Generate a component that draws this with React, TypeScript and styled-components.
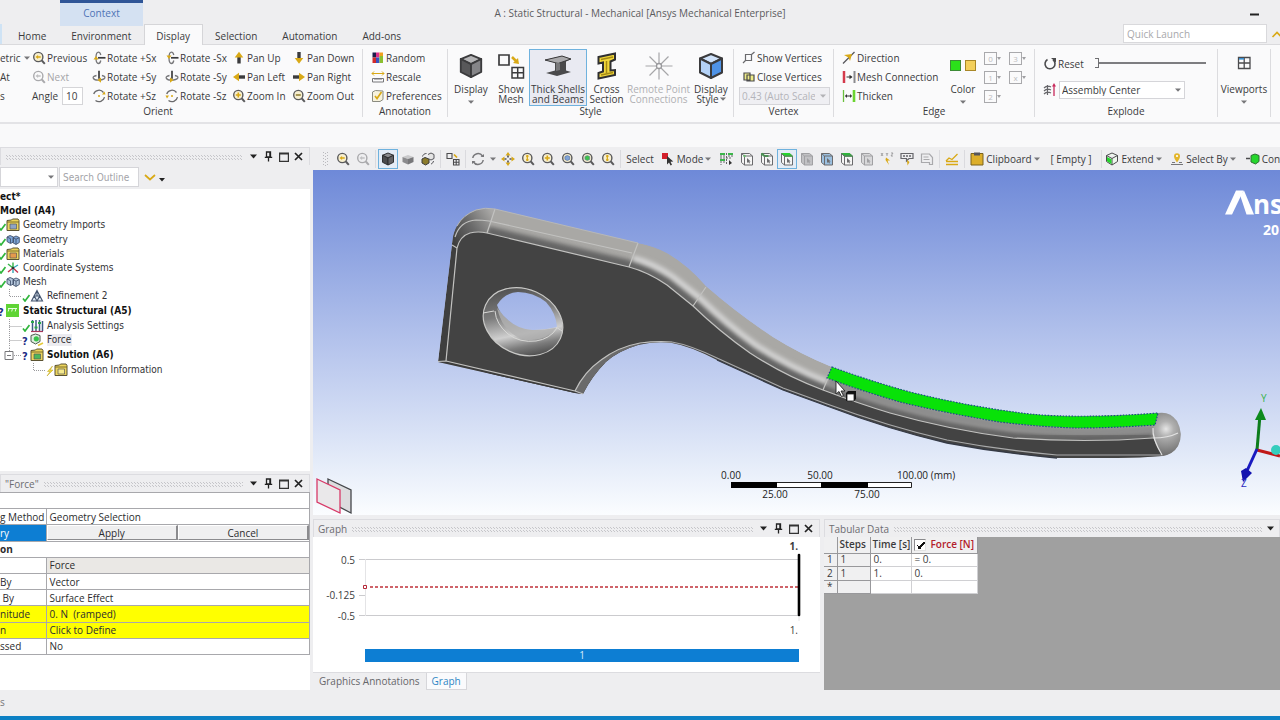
import React from 'react';
import styled, { createGlobalStyle, css } from 'styled-components';

const GlobalStyle = createGlobalStyle`
  *, *::before, *::after { box-sizing: border-box; }
  body { margin: 0; background: #eeeef0; overflow-x: hidden; }
  body, button, input, select, table {
    font-family: "Open Sans", "Noto Sans", sans-serif;
    font-size: 10px;
    line-height: 12px;
    color: #3b3b3d;
  }
  button { background: none; border: 0; padding: 0; }
  svg { display: block; flex: none; }
`;

const treeFont = '"DejaVu Sans Condensed", "DejaVu Sans", sans-serif';

/* ---------- shell ---------- */

const Shell = styled.div`
  min-height: 100vh;
  display: flex;
  flex-direction: column;
  overflow: hidden;
  background: #eeeef0;
`;

const TitleBar = styled.header`
  display: grid;
  grid-template-columns: 1fr auto 1fr;
  height: 24px;
`;

const ContextTab = styled.div`
  width: 83px;
  margin-left: 60px;
  border-top: 3px solid #2f5597;
  background: #d4e1f2;
  color: #4f74b6;
  text-align: center;
  line-height: 21px;
`;

const Title = styled.h1`
  margin: 0;
  font-size: 10px;
  font-weight: 400;
  line-height: 26px;
  color: #5b5b5e;
`;

const WindowButtons = styled.div`
  display: flex;
  justify-content: flex-end;
  align-items: center;
  padding: 2px 21px 0 0;
`;

const TabRow = styled.div`
  display: flex;
  height: 21px;
  border-bottom: 1px solid #dadadd;
`;

const FileEdge = styled.span`
  width: 2px;
  margin-right: 4px;
  background: #cfe3f5;
`;

const Tabs = styled.nav`
  display: flex;
  flex: 1;
`;

const Tab = styled.button<{ $active?: boolean }>`
  height: 21px;
  padding: 1px 12px 0 11px;
  border: 1px solid transparent;
  border-bottom: 0;
  ${p => p.$active && css`
    background: #fafafb;
    border-color: #d5d5d8;
  `}
`;

const QuickLaunch = styled.input`
  width: 144px;
  height: 19px;
  margin-right: 4px;
  padding: 0 3px;
  border: 1px solid #d9d9dc;
  background: #fff;
  &::placeholder { color: #a8a8ab; }
`;

const Collapse = styled.button`
  width: 9px;
  overflow: hidden;
`;

/* ---------- ribbon ---------- */

const Ribbon = styled.div`
  display: flex;
  height: 79px;
  padding: 4px 0 5px;
  background: #fafafb;
  border-bottom: 2px solid #e3e3e6;
`;

const RibbonTail = styled.div`
  height: 23px;
  background: #f9f9fa;
`;

const Group = styled.section<{ $w: number }>`
  flex: none;
  display: flex;
  flex-direction: column;
  width: ${p => p.$w}px;
  border-right: 1px solid #dcdcdf;
`;

const GroupBody = styled.div<{ $cols: string; $pad?: number }>`
  display: grid;
  grid-template-columns: ${p => p.$cols};
  height: 57px;
  padding-left: ${p => p.$pad ?? 0}px;
`;

const GroupLabel = styled.div<{ $shift?: number }>`
  padding-right: ${p => p.$shift ?? 0}px;
  text-align: center;
  line-height: 11px;
`;

const Stack = styled.div`
  display: flex;
  flex-direction: column;
`;

const Command = styled.button<{ $muted?: boolean; $inset?: number; $gap?: number }>`
  display: flex;
  align-items: center;
  gap: ${p => p.$gap ?? 1}px;
  height: 19px;
  padding: 0 0 1px ${p => p.$inset ?? 0}px;
  white-space: nowrap;
  text-align: left;
  color: ${p => (p.$muted ? '#a5a5a8' : 'inherit')};
`;

const AngleField = styled.label`
  display: flex;
  align-items: center;
  gap: 4px;
  height: 19px;
  padding-bottom: 1px;
`;

const AngleInput = styled.input`
  width: 21px;
  height: 18px;
  padding: 0 3px;
  border: 1px solid #d5d5d8;
  background: #fff;
`;

const BigButton = styled.button<{ $active?: boolean; $muted?: boolean }>`
  display: grid;
  grid-template-rows: 31px 24px;
  justify-items: center;
  height: 57px;
  border: 1px solid ${p => (p.$active ? '#6fb2de' : 'transparent')};
  background: ${p => (p.$active ? '#e9eaf2' : 'none')};
  color: ${p => (p.$muted ? '#b0b0b3' : 'inherit')};
  white-space: nowrap;
  > :first-child { align-self: center; }
`;

const Caption = styled.span`
  display: flex;
  flex-direction: column;
  align-items: center;
  justify-content: space-between;
  height: 24px;
  padding: 3px 0 1px;
  line-height: 10px;
`;

const TwoLines = styled.span`
  text-align: center;
  svg { display: inline-block; margin-left: 1px; vertical-align: 2px; }
`;

const SelectFrame = styled.span<{ $w: number; $muted?: boolean; $h?: number }>`
  position: relative;
  display: flex;
  align-items: center;
  width: ${p => p.$w}px;
  height: ${p => p.$h ?? 18}px;
  border: 1px solid #d5d5d9;
  background: ${p => (p.$muted ? '#efeff3' : '#fff')};
  select {
    appearance: none;
    width: 100%;
    height: 100%;
    padding: 0 14px 0 2px;
    border: 0;
    background: none;
    color: ${p => (p.$muted ? '#b4b4ba' : '#3b3b3d')};
    opacity: 1;
  }
  > svg {
    position: absolute;
    right: 3px;
    pointer-events: none;
    opacity: ${p => (p.$muted ? 0.5 : 1)};
  }
`;

const ColorSwatches = styled.span`
  display: flex;
  align-items: center;
  gap: 4px;
`;

const Swatch = styled.i<{ $fill: string; $edge: string }>`
  width: 11px;
  height: 11px;
  background: ${p => p.$fill};
  border: 1px solid ${p => p.$edge};
`;

const EdgeTypeGrid = styled.div`
  display: grid;
  grid-template-columns: 25px 25px;
  grid-auto-rows: 19px;
`;

const EdgeType = styled.button`
  display: flex;
  align-items: center;
`;

const EdgeNumber = styled.span`
  width: 13px;
  height: 13px;
  border: 1px solid #a9a9ac;
  color: #bcbcbf;
  font-size: 8px;
  line-height: 11px;
`;

const ExplodeRow = styled.div<{ $h: number }>`
  display: flex;
  align-items: center;
  gap: 3px;
  height: ${p => p.$h}px;
`;

const Slider = styled.input`
  appearance: none;
  width: 111px;
  height: 12px;
  margin: 0 0 2px 8px;
  background: linear-gradient(#7d7d80, #7d7d80) center / 100% 2px no-repeat;
  &::-webkit-slider-thumb {
    appearance: none;
    width: 4px;
    height: 10px;
    background: #fafafb;
    border: 1px solid #6e6e71;
    border-left: 0;
  }
`;

/* ---------- docking area ---------- */

const Workspace = styled.main`
  flex: 1;
  display: flex;
  gap: 3px;
  min-height: 543px;
`;

const SideColumn = styled.aside`
  flex: none;
  display: flex;
  flex-direction: column;
  gap: 3px;
  width: 310px;
`;

const Panel = styled.section<{ $grow?: string }>`
  display: flex;
  flex-direction: column;
  flex: ${p => p.$grow ?? 'none'};
  min-width: 0;
`;

const PanelHead = styled.div`
  display: flex;
  align-items: center;
  gap: 4px;
  height: 18px;
  padding: 0 5px 0 4px;
  border: 1px solid #dcdce0;
  border-bottom: 0;
  color: #6c6c70;
  white-space: nowrap;
`;

const HatchGrip = styled.span`
  flex: 1;
  height: 6px;
  margin-right: 1px;
  background-image:
    radial-gradient(#c6c6ca 36%, transparent 42%),
    radial-gradient(#c6c6ca 36%, transparent 42%);
  background-size: 3px 3px;
  background-position: 0 0, 1px 1px;
`;

const HeadButton = styled.button`
  width: 11px;
  height: 12px;
  display: grid;
  place-items: center;
`;

const OutlineFilter = styled.div`
  display: flex;
  align-items: center;
  gap: 1px;
  height: 24px;
`;

const SearchInput = styled.input`
  width: 80px;
  height: 20px;
  margin-right: 4px;
  padding: 0 3px;
  border: 1px solid #d5d5d9;
  background: #fff;
  font-family: ${treeFont};
  &::placeholder { color: #a3a3a8; }
`;

const TreeArea = styled.div`
  flex: 1;
  padding-top: 1px;
  background: #fff;
`;

const Tree = styled.ul`
  display: grid;
  grid-auto-rows: 1fr;
  height: 187px;
  margin: 0;
  padding: 0;
  list-style: none;
  font-family: ${treeFont};
  color: #333336;
`;

const TreeRow = styled.li<{ $level: number; $strong?: boolean }>`
  display: flex;
  align-items: center;
  padding-left: ${p => (p.$level > 1 ? p.$level * 24 - 39 : 0)}px;
  margin-left: ${p => (p.$level === 1 ? -2 : 0)}px;
  font-weight: ${p => (p.$strong ? 700 : 400)};
  color: ${p => (p.$strong ? '#111' : 'inherit')};
  white-space: nowrap;
`;

const Status = styled.span`
  width: 8px;
  color: #1d2a86;
  font-weight: 700;
  font-size: 11px;
  line-height: 12px;
  padding-top: 3px;
`;

const TreeLabel = styled.span<{ $hot?: boolean }>`
  padding: 0 1px 0 0;
  margin-left: 3px;
  background: ${p => (p.$hot ? '#ececf0' : 'none')};
`;

const DetailsArea = styled.div`
  flex: 1;
  background: #fff;
`;

const DetailsTable = styled.table`
  width: 100%;
  height: 163px;
  table-layout: fixed;
  border-collapse: collapse;
  color: #2c2c2e;
  td, th {
    height: 16px;
    padding: 0 3px;
    border: 1px solid #a8a8ac;
    border-left: 0;
    text-align: left;
    font-weight: 400;
    white-space: pre;
  }
  th { padding: 0; }
`;

const Col = styled.col<{ $w?: number }>`
  width: ${p => (p.$w ? `${p.$w}px` : 'auto')};
`;

const DetailRow = styled.tr<{ $tone?: 'edit' | 'warn' | 'readonly' }>`
  background: ${p => (p.$tone === 'warn' ? '#ffff00' : 'none')};
  th {
    background: ${p => (p.$tone === 'edit' ? '#0d7ed3' : 'none')};
    color: ${p => (p.$tone === 'edit' ? '#fff' : 'inherit')};
  }
  td { background: ${p => (p.$tone === 'readonly' ? '#eae8e5' : 'none')}; }
  && td { padding: ${p => (p.$tone === 'edit' ? '0' : '0 3px')}; }
  &&& .section { font-weight: 700; }
`;

const ConfirmPair = styled.div`
  display: grid;
  grid-template-columns: 1fr 1fr;
`;

const ConfirmButton = styled.button`
  height: 15px;
  background: #efeff0;
  border: 1px solid #fff;
  border-right: 2px solid #8b8b8e;
  border-bottom: 1px solid #8b8b8e;
  color: #2c2c2e;
`;

const MainColumn = styled.div`
  flex: 1;
  display: flex;
  flex-direction: column;
  min-width: 0;
`;

const Toolbar = styled.div`
  display: flex;
  align-items: center;
  height: 23px;
  overflow: hidden;
`;

const Tool = styled.button<{ $w?: number; $active?: boolean }>`
  flex: none;
  display: flex;
  align-items: center;
  justify-content: center;
  gap: 2px;
  width: ${p => p.$w ?? 20}px;
  height: 20px;
  white-space: nowrap;
  border: 1px solid ${p => (p.$active ? '#6fb2de' : 'transparent')};
  background: ${p => (p.$active ? '#e4ecf6' : 'none')};
`;

const ToolText = styled.span<{ $w: number }>`
  flex: none;
  width: ${p => p.$w}px;
  text-align: center;
`;

const Divider = styled.i`
  flex: none;
  width: 1px;
  height: 18px;
  margin: 0 2px;
  background: #dadade;
`;

const Viewport = styled.div`
  position: relative;
  flex: 1;
  min-height: 345px;
  svg {
    position: absolute;
    inset: 0;
    width: 100%;
    height: 100%;
  }
`;

const BottomRow = styled.div`
  display: flex;
  gap: 4px;
  height: 171px;
  margin-top: 4px;
`;

const GraphCanvas = styled.div`
  flex: 1;
  min-height: 0;
  background: #fff;
  border-bottom: 1px solid #dcdce0;
  svg { width: 100%; height: 100%; }
`;

const GraphTabs = styled.div`
  display: flex;
  height: 17px;
`;

const GraphTab = styled.button<{ $active?: boolean }>`
  padding: 0 5px;
  color: ${p => (p.$active ? '#2f86c4' : '#66666a')};
  background: ${p => (p.$active ? '#fafafc' : 'none')};
  border: 1px solid ${p => (p.$active ? '#d6d6da' : 'transparent')};
  border-top: 0;
`;

const TabularArea = styled.div`
  flex: 1;
  background: #a0a0a0;
`;

const DataTable = styled.table`
  width: 153px;
  height: 57px;
  table-layout: fixed;
  border-collapse: collapse;
  background: #fff;
  td, th {
    height: 13px;
    padding: 0 3px;
    border: 1px solid #d0d0d3;
    border-top: 0;
    border-left: 0;
    text-align: left;
    font-weight: 400;
    line-height: 11px;
    white-space: nowrap;
    overflow: hidden;
  }
  thead th {
    height: 16px;
    padding: 0 2px;
    background: #f0f0f1;
    border-color: #98989b;
    font-weight: 600;
  }
  tbody th, tbody td:nth-child(2) {
    background: #f0f0f1;
    border-color: #98989b;
  }
`;

const ForceHead = styled.label`
  display: flex;
  align-items: center;
  gap: 5px;
  color: #b3202c;
`;

const Tick = styled.input`
  appearance: none;
  width: 12px;
  height: 12px;
  margin: 0;
  background:
    linear-gradient(45deg, transparent 38%, #111 38%, #111 62%, transparent 62%) 2px 5px / 4px 4px no-repeat,
    linear-gradient(-45deg, transparent 42%, #111 42%, #111 60%, transparent 60%) 3px 2px / 7px 7px no-repeat,
    #fff;
  border: 1px solid #8a8a8d;
  border-right-color: #e2e2e2;
  border-bottom-color: #e2e2e2;
`;

const StatusBar = styled.footer`
  height: 30px;
  border-bottom: 4px solid #0c80c4;
  line-height: 24px;
  color: #77777a;
`;

/* ---------- glyphs ---------- */

type GlyphProps = { w?: number; h?: number; box?: string; children: React.ReactNode };
const Glyph = ({ w = 14, h = 14, box, children }: GlyphProps) => (
  <svg width={w} height={h} viewBox={box ?? `0 0 ${w} ${h}`} fill="none" aria-hidden="true">{children}</svg>
);

const Caret = () => (
  <Glyph w={6} h={4}><path d="M0 .5h6L3 3.8z" fill="#77777a" /></Glyph>
);

const GOLD = '#d9a916';

const Magnifier = ({ muted, kind }: { muted?: boolean; kind?: 'in' | 'out' | 'left' | 'cube' | 'green' | 'doc' }) => {
  const ink = muted ? '#a9a9ac' : '#5a5a5c';
  return (
    <Glyph>
      <circle cx="6.3" cy="6" r="4.6" stroke={ink} strokeWidth="1.400" fill={muted ? 'none' : '#f7efcf'} />
      <path d="M9.8 9.500l3 3.300" stroke={ink} strokeWidth="2" />
      {kind === 'in' && <path d="M6.300 3.500v5M3.800 6h5" stroke={GOLD} strokeWidth="1.600" />}
      {kind === 'out' && <path d="M3.800 6h5" stroke="#8c7a2c" strokeWidth="1.500" />}
      {kind === 'left' && <path d="M3.500 6l2.600-2v1.200h2.600v1.600H6.100V8z" fill={muted ? '#c0c0c2' : GOLD} />}
      {kind === 'cube' && <path d="M6.300 3.400l2.400 1.200v2.800L6.300 8.600 3.900 7.400V4.600z" fill="#7fa2d6" stroke="#4d6a9c" strokeWidth=".6" />}
      {kind === 'green' && <path d="M6.300 3.400l2.400 1.200v2.800L6.300 8.600 3.900 7.400V4.600z" fill="#3ec24b" stroke="#6a7fa0" strokeWidth=".6" />}
      {kind === 'doc' && <path d="M6.300 3v6M5 4.200h2.600M5 7.800h2.600" stroke={GOLD} strokeWidth="1.300" />}
    </Glyph>
  );
};

const RotateGlyph = ({ axis, flip }: { axis: 'x' | 'y' | 'z'; flip?: boolean }) => (
  <Glyph>
    {axis === 'x' && (
      <>
        <path d="M8.800 4C8.300 2.300 7.400 1.200 6.500 1.200 4.900 1.200 4 3.800 4 6.800s1 5.700 2.500 5.700c1 0 1.900-1.200 2.300-3" stroke="#77777a" strokeWidth="1.300" />
        <path d="M6 6.800h7.500" stroke="#3b3b3d" strokeWidth="1.700" />
        <path d={flip ? 'M1.500 4.500h5L4 8z' : 'M1.500 8.500h5L4 5z'} fill={GOLD} />
      </>
    )}
    {axis === 'y' && (
      <>
        <path d="M4.500 5.500C2 6 .8 7 1.200 8c.7 1.700 4 2.500 7.300 2 3-.4 4.800-1.600 4.400-2.900-.3-.8-1.400-1.400-3-1.600" stroke="#77777a" strokeWidth="1.300" />
        <path d="M7 .8v8" stroke="#3b3b3d" strokeWidth="1.700" />
        <path d={flip ? 'M5 7.500l3.500 2.500L5 12.700z' : 'M9 7.500L5.500 10 9 12.700z'} fill={GOLD} />
      </>
    )}
    {axis === 'z' && (
      <>
        <path d="M1.700 5A5.600 5.600 0 0 1 11.500 3.500M12.500 8.200A5.600 5.600 0 0 1 3.500 11.400" stroke="#6a6a6c" strokeWidth="1.300" />
        <path d={flip ? 'M.5 6.500h3.500L2 9.500z' : 'M10 5.500h3.500L12.500 2.500z'} fill={GOLD} />
        <circle cx="7" cy="7" r="1" fill={GOLD} />
      </>
    )}
  </Glyph>
);

const UpArrow = () => (
  <Glyph>
    <path d="M5.300 6h3.400v6.500H5.300z" fill="#3b3b3d" />
    <path d="M7 .8l4.300 5.700H2.700z" fill={GOLD} />
  </Glyph>
);

const DropArrow = () => (
  <Glyph>
    <path d="M5.300 1h3.400v6H5.300z" fill="#3b3b3d" />
    <path d="M7 12.700L11.300 7H2.700z" fill={GOLD} />
  </Glyph>
);

const SideArrow = ({ right }: { right?: boolean }) => (
  <Glyph>
    <g transform={right ? undefined : 'rotate(180 7 7)'}>
      <path d="M1 5.300h6v3.400H1z" fill="#3b3b3d" />
      <path d="M13 7L7 2.700v8.600z" fill={GOLD} />
    </g>
  </Glyph>
);

type CubeProps = { size?: number; top: string; left: string; right: string; line?: string };
const Cube = ({ size = 14, top, left, right, line = '#3b3b3d' }: CubeProps) => (
  <Glyph w={size} h={size} box="0 0 28 28">
    <g stroke={line} strokeWidth="2" strokeLinejoin="round">
      <path d="M14 2l11 4.500-11 5.500L3 6.500z" fill={top} />
      <path d="M3 6.500L14 12v14L3 20.500z" fill={left} />
      <path d="M25 6.500L14 12v14l11-5.500z" fill={right} />
    </g>
  </Glyph>
);

const SelectCube = ({ accent, muted, part }: { accent?: string; muted?: boolean; part?: 'point' | 'edge' | 'face' | 'fill' }) => {
  const ink = muted ? '#a0a0a3' : '#6a6a6d';
  return (
    <Glyph>
      <path d="M1.500 1.500h8l3 2.500v9h-8l-3-2.500z" fill={part === 'fill' ? accent : '#f6f6f6'} stroke={ink} />
      {part === 'face' && <path d="M1.500 1.500h8l3 2.800h-8z" fill={accent} stroke={accent} />}
      {part === 'edge' && <path d="M1.500 1.500l3 2.500h4" stroke={accent} strokeWidth="2" />}
      <path d="M4.500 4v9M4.500 4h8M1.500 1.500l3 2.500" stroke={ink} />
      {part === 'point' && <circle cx="4.500" cy="4" r="1.200" fill={accent} />}
      <path d="M7 6v5l1.200-1.100.9 1.700.9-.5-.8-1.600 1.500-.1z" fill={ink} />
    </Glyph>
  );
};

const Pin = () => (
  <Glyph w={9} h={11}><path d="M2.500 1h4v5h-4zM.8 6.300h7.400M4.500 6.500V10.500" stroke="#222" strokeWidth="1.300" /><path d="M5.300 1h1.500v5H5.300z" fill="#222" /></Glyph>
);
const Maximize = () => (
  <Glyph w={10} h={10}><path d="M.6 1h8.800v8.300H.6zM.6 2h8.800" stroke="#333" strokeWidth="1.200" /></Glyph>
);
const Close = () => (
  <Glyph w={9} h={9}><path d="M1 1l7 7M8 1L1 8" stroke="#222" strokeWidth="1.700" /></Glyph>
);
const Chevron = ({ up }: { up?: boolean }) => (
  <Glyph w={12} h={7}><path d={up ? 'M1.500 6L6 1.500 10.500 6' : 'M1 1l5 4.500L11 1'} stroke={GOLD} strokeWidth="1.700" /></Glyph>
);

const Folder = ({ mark }: { mark: string }) => (
  <Glyph>
    <path d="M1 2.500L5.500 2l1-1h5.500l1 1.500v10H1z" fill="#ecd45c" stroke="#5b5332" />
    <path d="M1 4h12" stroke="#7d6e2b" />
    <path d="M4 6h6.500v5H4z" fill={mark} stroke="#5a5a5a" strokeWidth=".7" />
  </Glyph>
);
const Bricks = ({ fill }: { fill: string }) => (
  <Glyph>
    <path d="M1 4l3-1.500L7.500 4v5L4.500 10.500 1 8.500zM7 4.500l3-1.500 3.300 1.500v5L10 11.500 7 9.800zM1 4l3.500 1.700V10M7 4.500l3 1.700v5M10 6.200l3.200-1.500" fill={fill} stroke="#44546e" strokeWidth=".9" />
  </Glyph>
);
const Axes = () => (
  <Glyph>
    <path d="M7 7V1.500M7 7L2 3" stroke="#38b44a" strokeWidth="1.400" />
    <path d="M7 7l5 4.500M7 7l-5 4" stroke="#c4304a" strokeWidth="1.400" />
    <path d="M7 7l5-3M7 7v5" stroke="#35a9b6" strokeWidth="1.400" />
    <circle cx="7" cy="7" r="1.300" fill="#333" />
  </Glyph>
);
const RefineMark = () => (
  <Glyph><path d="M7 1.500l5.500 10.500h-11zM4.300 7h5.400L7 12zM7 1.500V7" fill="#dfe8f2" stroke="#44546e" strokeWidth="1.100" /></Glyph>
);
const StructuralMark = () => (
  <Glyph><path d="M0 0h13v13H0z" fill="#5fd435" /><path d="M2 4.500h9M3 4.500l-.8 3M6.500 4.500l-.8 3M10 4.500l-.8 3" stroke="#e8ffe0" /></Glyph>
);
const SettingsMark = () => (
  <Glyph>
    <path d="M2.500 1v11M6 1v11M9.500 1v11M12.500 2v10" stroke="#3f5b86" strokeWidth="1.500" />
    <path d="M1 3h3M4.500 8.500h3M8 4h3" stroke="#2aa84a" strokeWidth="2" />
    <path d="M1 12.500h12" stroke="#a8385c" strokeWidth="1.200" />
  </Glyph>
);
const ForceMark = () => (
  <Glyph>
    <path d="M5.500 1L10 2.500v6L5.500 11 1 8.500v-6z" fill="#dfeee0" stroke="#4a5a4d" />
    <circle cx="6.300" cy="5.800" r="2.600" fill="#38c24c" />
    <path d="M8 12.500l5-2.500" stroke="#e5c93b" strokeWidth="1.800" />
  </Glyph>
);
const Check = () => (
  <Glyph w={8} h={9}><path d="M1 5.500l2 2.500L7.500 2" stroke="#2fb53c" strokeWidth="1.700" /></Glyph>
);
const Bolt = () => (
  <Glyph w={8} h={10}><path d="M6.500 0L1.500 5.500h2.500L1 10l6-6H4.300z" fill="#f2dd3a" stroke="#bfa31c" strokeWidth=".5" /></Glyph>
);

const Branch = ({ tee, box }: { tee?: boolean; box?: boolean }) => (
  <svg width="13" height="14" viewBox="0 0 13 14" fill="none" overflow="visible" aria-hidden="true">
    <path d={tee ? 'M.5 0v14.500M.5 7.500H13' : 'M.5 0v7.500H13'} stroke="#9a9a9d" strokeDasharray="1 1" />
    {box && <path d="M-4 3.500h8v8h-8zM-2 7.500h4" fill="#fff" stroke="#77777a" />}
  </svg>
);

/* ---------- panels ---------- */

const HeadButtons = () => (
  <>
    <HeadButton aria-label="Panel menu"><Glyph w={7} h={5}><path d="M0 .5h7L3.500 4.500z" fill="#222" /></Glyph></HeadButton>
    <HeadButton aria-label="Pin"><Pin /></HeadButton>
    <HeadButton aria-label="Maximize"><Maximize /></HeadButton>
    <HeadButton aria-label="Close"><Close /></HeadButton>
  </>
);

type Node = {
  label: string; level: number; strong?: boolean; hot?: boolean;
  icon?: React.ReactNode; status?: React.ReactNode; tee?: boolean; box?: boolean;
};

const nodes: Node[] = [
  { label: 'ect*', level: 0, strong: true },
  { label: 'Model (A4)', level: 0, strong: true },
  { label: 'Geometry Imports', level: 1, status: <Check />, icon: <Folder mark="#8fa4c4" /> },
  { label: 'Geometry', level: 1, status: <Check />, icon: <Bricks fill="#7fa6d8" /> },
  { label: 'Materials', level: 1, status: <Check />, icon: <Folder mark="#e59a4c" /> },
  { label: 'Coordinate Systems', level: 1, status: <Check />, icon: <Axes /> },
  { label: 'Mesh', level: 1, status: <Check />, icon: <Bricks fill="#b6c8dd" /> },
  { label: 'Refinement 2', level: 2, status: <Check />, icon: <RefineMark /> },
  { label: 'Static Structural (A5)', level: 1, strong: true, status: '?', icon: <StructuralMark /> },
  { label: 'Analysis Settings', level: 2, tee: true, status: <Check />, icon: <SettingsMark /> },
  { label: 'Force', level: 2, tee: true, hot: true, status: '?', icon: <ForceMark /> },
  { label: 'Solution (A6)', level: 2, box: true, strong: true, status: '?', icon: <Folder mark="#4cb85a" /> },
  { label: 'Solution Information', level: 3, status: <Bolt />, icon: <Folder mark="#f5e98c" /> },
];

const Outline = () => (
  <Panel $grow="324 0 324px">
    <PanelHead><HatchGrip /><HeadButtons /></PanelHead>
    <OutlineFilter>
      <SelectFrame $w={58} $h={20}>
        <select aria-label="Outline filter"><option> </option></select><Caret />
      </SelectFrame>
      <SearchInput placeholder="Search Outline" aria-label="Search Outline" />
      <HeadButton aria-label="Expand"><Chevron /></HeadButton>
      <HeadButton aria-label="More"><Glyph w={6} h={10}><path d="M0 6h6L3 9.500z" fill="#222" /></Glyph></HeadButton>
    </OutlineFilter>
    <TreeArea>
      <Tree>
        {nodes.map(n => (
          <TreeRow key={n.label} $level={n.level} $strong={n.strong}>
            {n.level > 1 && <Branch tee={n.tee} box={n.box} />}
            {n.level > 0 && <Status>{n.status}</Status>}
            {n.icon}
            {n.level > 0 ? <TreeLabel $hot={n.hot}>{n.label}</TreeLabel> : n.label}
          </TreeRow>
        ))}
      </Tree>
    </TreeArea>
  </Panel>
);

type Detail = { name: string; value: string; tone?: 'warn' | 'readonly' };
const details: Detail[] = [
  { name: '', value: 'Force', tone: 'readonly' },
  { name: 'By', value: 'Vector' },
  { name: ' By', value: 'Surface Effect' },
  { name: 'nitude', value: '0. N  (ramped)', tone: 'warn' },
  { name: 'n', value: 'Click to Define', tone: 'warn' },
  { name: 'ssed', value: 'No' },
];

const Details = () => (
  <Panel $grow="216 0 216px">
    <PanelHead>{'"Force"'}<HatchGrip /><HeadButtons /></PanelHead>
    <DetailsArea>
      <DetailsTable>
        <colgroup><Col $w={46} /><Col /></colgroup>
        <tbody>
          <DetailRow><th className="section" colSpan={2} /></DetailRow>
          <DetailRow><th scope="row">g Method</th><td>Geometry Selection</td></DetailRow>
          <DetailRow $tone="edit">
            <th scope="row">ry</th>
            <td><ConfirmPair><ConfirmButton>Apply</ConfirmButton><ConfirmButton>Cancel</ConfirmButton></ConfirmPair></td>
          </DetailRow>
          <DetailRow><th className="section" colSpan={2}>on</th></DetailRow>
          {details.map(d => (
            <DetailRow key={d.value} $tone={d.tone}><th scope="row">{d.name}</th><td>{d.value}</td></DetailRow>
          ))}
        </tbody>
      </DetailsTable>
    </DetailsArea>
  </Panel>
);

const RibbonBar = () => (
  <Ribbon>
    <Group $w={363}>
      <GroupBody $cols="32px 60px 73px 67px 60px 70px">
        <Stack>
          <Command $gap={3}>etric<Caret /></Command>
          <Command>At</Command>
          <Command>s</Command>
        </Stack>
        <Stack>
          <Command><Magnifier kind="left" />Previous</Command>
          <Command $muted><Magnifier kind="left" muted />Next</Command>
          <AngleField>Angle<AngleInput defaultValue="10" /></AngleField>
        </Stack>
        <Stack>
          <Command><RotateGlyph axis="x" />Rotate +Sx</Command>
          <Command><RotateGlyph axis="y" />Rotate +Sy</Command>
          <Command><RotateGlyph axis="z" />Rotate +Sz</Command>
        </Stack>
        <Stack>
          <Command><RotateGlyph axis="x" flip />Rotate -Sx</Command>
          <Command><RotateGlyph axis="y" flip />Rotate -Sy</Command>
          <Command><RotateGlyph axis="z" flip />Rotate -Sz</Command>
        </Stack>
        <Stack>
          <Command><UpArrow />Pan Up</Command>
          <Command><SideArrow />Pan Left</Command>
          <Command><Magnifier kind="in" />Zoom In</Command>
        </Stack>
        <Stack>
          <Command><DropArrow />Pan Down</Command>
          <Command><SideArrow right />Pan Right</Command>
          <Command><Magnifier kind="out" />Zoom Out</Command>
        </Stack>
      </GroupBody>
      <GroupLabel $shift={46}>Orient</GroupLabel>
    </Group>

    <Group $w={85}>
      <GroupBody $cols="1fr" $pad={8}>
        <Stack>
          <Command>
            <Glyph><path d="M1.500 1.500H5v5H1.500z" fill="#1d1d4a" /><path d="M5 1.500h3.500v5H5z" fill="#e0308a" /><path d="M8.500 1.500H12V5H8.500z" fill="#f0a020" /><path d="M1.500 6.500H5V12H1.500z" fill="#d12a2a" /><path d="M5 6.500h3.500V12H5z" fill="#3a53c0" /><path d="M8.500 5H12v7H8.500z" fill="#8bbf30" /></Glyph>
            Random
          </Command>
          <Command>
            <Glyph><path d="M1 3.500h12M3 1.500l-2 2 2 2M11 1.500l2 2-2 2" stroke={GOLD} /><path d="M1.500 8.500h11v3.500h-11zM4 8.500V10M6 8.500V10M8 8.500V10M10 8.500V10" stroke="#77777a" /></Glyph>
            Rescale
          </Command>
          <Command>
            <Glyph><path d="M1.500 3l3-1.500 7.500.5v8.500l-3 2H1.500z" stroke="#8b8b80" fill="#f7f2dc" /><path d="M4 7l2 2.500L10.500 3" stroke={GOLD} strokeWidth="1.700" /></Glyph>
            Preferences
          </Command>
        </Stack>
      </GroupBody>
      <GroupLabel>Annotation</GroupLabel>
    </Group>

    <Group $w={286}>
      <GroupBody $cols="44px 36px 58px 39px 65px 40px" $pad={1}>
        <BigButton>
          <Cube size={26} top="#b5b5b7" left="#58585a" right="#858588" />
          <Caption>Display<Caret /></Caption>
        </BigButton>
        <BigButton>
          <Glyph w={28} h={28}>
            <path d="M2 3h10v10H2z" stroke="#3b3b3d" strokeWidth="1.700" />
            <path d="M15 15.500h11.500V26H15zM20.700 15.500V26M15 20.700h11.500" stroke="#3b3b3d" strokeWidth="1.500" />
            <path d="M15 5l4 4" stroke={GOLD} strokeWidth="2.500" /><path d="M22 12l-1-6-5 5z" fill={GOLD} />
          </Glyph>
          <Caption><TwoLines>Show<br />Mesh</TwoLines></Caption>
        </BigButton>
        <BigButton $active>
          <Glyph w={28} h={22}>
            <path d="M1 5l17-4 9 3-5 2.500v9l5 1.500-14 4-11-3 9-2.500V7.500z" fill="#4a4a4c" />
            <path d="M1 5l17-4 9 3-13 4.500z" fill="#a9a9ac" stroke="#3b3b3d" />
            <path d="M12 16l4-1V8.500L12 7z" fill="#77777a" />
          </Glyph>
          <Caption><TwoLines>Thick Shells<br />and Beams</TwoLines></Caption>
        </BigButton>
        <BigButton>
          <Glyph w={20} h={28}>
            <path d="M1.500 5L18 1.500v6l-4.500 2v9l4.500-.5v5L1.500 26.500v-5.500l4.500-1.500v-9l-4.500 1z" fill="#f0d63a" stroke="#2f2f31" strokeWidth="2" />
            <path d="M4 7.500l12-2.500M9.500 9v12M4 23l12-2.500" stroke="#a58a15" strokeWidth="1.500" />
          </Glyph>
          <Caption><TwoLines>Cross<br />Section</TwoLines></Caption>
        </BigButton>
        <BigButton $muted>
          <Glyph w={28} h={28}>
            <path d="M14 .5V11M14 17v10.500M.5 14H11M17 14h10.500M4.500 4.500L12 12M23.500 4.500L16 12M4.500 23.500L12 16M23.500 23.500L16 16" stroke="#a6a6a9" strokeWidth="1.200" />
            <circle cx="14" cy="14" r="2.500" stroke="#98989b" strokeWidth="1.300" />
          </Glyph>
          <Caption><TwoLines>Remote Point<br />Connections</TwoLines></Caption>
        </BigButton>
        <BigButton>
          <Cube size={28} top="#cfe2fa" left="#b4d2f7" right="#4f93e6" />
          <Caption><TwoLines>Display<br />Style<Caret /></TwoLines></Caption>
        </BigButton>
      </GroupBody>
      <GroupLabel>Style</GroupLabel>
    </Group>

    <Group $w={100}>
      <GroupBody $cols="1fr" $pad={5}>
        <Stack>
          <Command $inset={3}>
            <Glyph><path d="M3.500 3.500h6v6h-6zM9.500 3.500l3-2.500M3.500 9.500L1 12" stroke="#6a6a6d" strokeWidth="1.200" /></Glyph>
            Show Vertices
          </Command>
          <Command $inset={3}>
            <Glyph><path d="M2 3h6v7H2zM5 5h7v6H5z" stroke="#4b4b4d" strokeWidth="1.200" fill="#e6e23a" fillOpacity=".6" /></Glyph>
            Close Vertices
          </Command>
          <SelectFrame $w={91} $muted>
            <select aria-label="Vertex size" disabled><option>0.43 (Auto Scale)</option></select><Caret />
          </SelectFrame>
        </Stack>
      </GroupBody>
      <GroupLabel>Vertex</GroupLabel>
    </Group>

    <Group $w={201}>
      <GroupBody $cols="100px 42px 50px" $pad={8}>
        <Stack>
          <Command>
            <Glyph><path d="M1 12.500L12.500 1" stroke="#55555a" strokeWidth="1.200" /><path d="M2 4l8-1-2 7-1.500-3.500z" fill={GOLD} /></Glyph>
            Direction
          </Command>
          <Command>
            <Glyph><path d="M2 1v12" stroke="#d43a4c" strokeWidth="2.500" /><path d="M12.500 1v12" stroke="#8b8b8e" strokeWidth="2" /><path d="M4.500 7h5" stroke="#333" /><path d="M7.500 4.800L10.500 7l-3 2.200z" fill="#333" /></Glyph>
            Mesh Connection
          </Command>
          <Command>
            <Glyph><path d="M1.500 1v12" stroke="#6abf3c" strokeWidth="1.300" /><path d="M12 1v12" stroke="#6cd430" strokeWidth="2.600" /><path d="M3.500 7h6" stroke="#333" /><path d="M5 5L3 7l2 2zM8 5l2 2-2 2z" fill="#333" /></Glyph>
            Thicken
          </Command>
        </Stack>
        <BigButton>
          <ColorSwatches><Swatch $fill="#2be01a" $edge="#3c8b35" /><Swatch $fill="#f3cf5a" $edge="#a98727" /></ColorSwatches>
          <Caption>Color<Caret /></Caption>
        </BigButton>
        <EdgeTypeGrid>
          {['0', '3', '1', 'x', '2'].map(n => (
            <EdgeType key={n}><EdgeNumber>{n}</EdgeNumber><Glyph w={4} h={3}><path d="M0 0h4L2 3z" fill="#a0a0a3" /></Glyph></EdgeType>
          ))}
        </EdgeTypeGrid>
      </GroupBody>
      <GroupLabel>Edge</GroupLabel>
    </Group>

    <Group $w={183}>
      <GroupBody $cols="1fr" $pad={8}>
        <Stack>
          <ExplodeRow $h={30}>
            <Command>
              <Glyph><path d="M4.500 2.500a5 5 0 1 0 5.500.3" stroke="#4b4b4d" strokeWidth="1.600" /><path d="M8 1h5v4.500z" fill="#4b4b4d" /></Glyph>
              Reset
            </Command>
            <Slider type="range" defaultValue={0} aria-label="Explode factor" />
          </ExplodeRow>
          <ExplodeRow $h={22}>
            <Glyph w={13} h={14}><path d="M1 5c2-2 5-2 7-1M1 8c2-2 5-2 7-1M1 11c2-2 5-2 7-1M4.500 2v10" stroke="#66666a" strokeWidth="1.200" /><path d="M11 3v10" stroke="#c7285a" strokeWidth="1.300" /><path d="M11 0l2 3.500H9z" fill="#c7285a" /></Glyph>
            <SelectFrame $w={126}>
              <select aria-label="Explode center"><option>Assembly Center</option></select><Caret />
            </SelectFrame>
          </ExplodeRow>
        </Stack>
      </GroupBody>
      <GroupLabel>Explode</GroupLabel>
    </Group>

    <Group $w={53}>
      <GroupBody $cols="1fr">
        <BigButton>
          <Glyph w={14} h={20}><path d="M1.500 1.500h11.500v11H1.500zM7.200 1.500v11M1.500 7h11.500" stroke="#4b4b4d" strokeWidth="1.300" /><path d="M2 2h5v1.600H2z" fill="#3a8fd0" /></Glyph>
          <Caption>Viewports<Caret /></Caption>
        </BigButton>
      </GroupBody>
    </Group>
  </Ribbon>
);

const ViewToolbar = () => (
  <Toolbar>
    <Glyph w={20} h={16}><path d="M10.500 1v14M12.500 2v14M14.500 1v14" stroke="#b9b9bd" strokeDasharray="1 2" /></Glyph>
    <Tool aria-label="Previous view"><Magnifier kind="left" /></Tool>
    <Tool aria-label="Next view"><Magnifier kind="left" muted /></Tool>
    <Divider />
    <Tool $active aria-label="Shaded with edges"><Cube top="#8b8b8e" left="#4b4b4d" right="#636366" line="#2f2f31" /></Tool>
    <Tool aria-label="Shaded">
      <Glyph><path d="M1.500 5L7 3l5.500 2L7 7z" fill="#c9c9cb" /><path d="M1.500 5L7 7v5.500L1.500 10z" fill="#8b8b8e" /><path d="M12.500 5L7 7v5.500l5.500-2.500z" fill="#77777a" /></Glyph>
    </Tool>
    <Tool aria-label="Cycle display">
      <Glyph><path d="M1 7l3-1.500L8 7v4l-3.500 2L1 11z" fill="#8b7b2c" stroke="#3b3b3d" /><path d="M7 2.500L10 1l3 1.500v4L10 8 8 7" fill="#e4e4e4" stroke="#55555a" /><path d="M1.500 4.500C2 2.500 3.500 1.500 5.500 1.500M12.500 9c-.3 1.500-1 2.500-2.500 3" stroke="#55555a" /></Glyph>
    </Tool>
    <Divider />
    <Tool aria-label="Show mesh">
      <Glyph><path d="M1 1.500h5v5H1zM7.500 7.500h5.500V13H7.500zM10.200 7.500V13M7.500 10.200H13" stroke="#4b4b4d" strokeWidth="1.100" /><path d="M8 2.500l3 3" stroke={GOLD} strokeWidth="1.700" /></Glyph>
    </Tool>
    <Divider />
    <Tool aria-label="Rotate">
      <Glyph><path d="M1.800 6A5.300 5.300 0 0 1 11.500 4M12.200 8A5.300 5.300 0 0 1 2.500 10" stroke="#77777a" strokeWidth="1.500" /><path d="M9.500 5h3.500V2zM4.500 9H1v3z" fill="#77777a" /></Glyph>
    </Tool>
    <Tool $w={10} aria-label="Rotate options"><Caret /></Tool>
    <Tool aria-label="Pan">
      <Glyph><path d="M7 0l2.500 3.500h-5zM7 14l2.500-3.500h-5zM0 7l3.500-2.500v5zM14 7l-3.500-2.500v5z" fill={GOLD} /><path d="M7 3.500v2M7 8.500v2M3.500 7h2M8.500 7h2" stroke="#55555a" strokeWidth="1.700" /></Glyph>
    </Tool>
    <Tool aria-label="Zoom"><Magnifier kind="doc" /></Tool>
    <Tool aria-label="Zoom in"><Magnifier kind="in" /></Tool>
    <Tool aria-label="Zoom to fit"><Magnifier kind="cube" /></Tool>
    <Tool aria-label="Zoom to selection"><Magnifier kind="green" /></Tool>
    <Tool aria-label="Box zoom"><Magnifier kind="doc" /></Tool>
    <Divider />
    <ToolText $w={34}>Select</ToolText>
    <Tool $w={58}>
      <Glyph><path d="M1 1h6v6H1z" fill="#d3202c" /><path d="M6 4v8.500l2-2 1.600 3 1.400-.8-1.500-2.900 2.800-.3z" fill="#333" /></Glyph>
      Mode<Caret />
    </Tool>
    <Tool $w={22} aria-label="Select mode grid">
      <Glyph w={15} h={14}><path d="M1 2h5M9 2h5M1 8h5" stroke="#3bb54a" strokeWidth="2" /><path d="M2 3v3M5 3v3M10 3v3M13 3v3M2 9v4M5 9v3M7.500 1v12M1 6h12" stroke="#66666a" strokeDasharray="2 1" /><path d="M10 8v5l3-2z" fill="#333" /></Glyph>
    </Tool>
    <Tool aria-label="Vertex"><SelectCube part="point" accent="#66bb6a" /></Tool>
    <Tool aria-label="Edge"><SelectCube part="edge" accent="#2fb53c" /></Tool>
    <Tool $active aria-label="Face"><SelectCube part="face" accent="#25d62c" /></Tool>
    <Tool aria-label="Body"><SelectCube part="fill" accent="#c2c2c5" muted /></Tool>
    <Tool aria-label="Node"><SelectCube part="fill" accent="#9cc0e0" /></Tool>
    <Tool aria-label="Element face"><SelectCube part="face" accent="#2fb53c" /></Tool>
    <Tool aria-label="Element"><SelectCube part="fill" accent="#d8d8da" muted /></Tool>
    <Tool aria-label="Coordinates">
      <Glyph><path d="M1 1l2 3M3 1L1 4M6 1l1 1.500L8 1M7 2.500V4M11 1h2l-2 3h2" stroke="#98989b" strokeWidth=".9" /><path d="M6 5.500l4 3H7.500L9 13 5.500 8z" fill={GOLD} /></Glyph>
    </Tool>
    <Tool aria-label="Probe">
      <Glyph><path d="M1 1.500h12v5H9L6.500 9V6.500H1z" stroke="#66666a" strokeWidth="1.200" /><path d="M3 4h2M6 4h2M9 4h2" stroke="#66666a" strokeWidth="1.500" /><path d="M7 8l2.500 2-2 3.500z" fill={GOLD} /></Glyph>
    </Tool>
    <Tool aria-label="Tag"><Glyph><path d="M1.500 2h8l3 3.500v7h-3v-2h-8zM3.500 5h5M3.500 7.500h6" stroke="#a9a9ac" strokeWidth="1.200" /></Glyph></Tool>
    <Divider />
    <Tool aria-label="Chart"><Glyph><path d="M1 9l3-3 3 1.500L12.500 2M1 9.500h12M1 12.500h12" stroke={GOLD} strokeWidth="1.300" /></Glyph></Tool>
    <Divider />
    <Tool $w={76}>
      <Glyph><path d="M1 1.500h12v11.500H1z" fill="#dcae2a" stroke="#7a621c" /><path d="M4 .5h6v3H4z" fill="#55555a" /></Glyph>
      Clipboard<Caret />
    </Tool>
    <ToolText $w={56}>[ Empty ]</ToolText>
    <Divider />
    <Tool $w={59}>
      <Glyph><path d="M7 1l5.500 2.500v6L7 13 1.500 9.500v-6zM7 6.500V13M1.500 3.500L7 6.500l5.500-3" fill="#eef7ee" stroke="#4b4b4d" /><path d="M2 5v4.200L6.500 12V7.300z" fill="#25d62c" /></Glyph>
      Extend<Caret />
    </Tool>
    <Tool $w={80}>
      <Glyph><path d="M7 10.500C5 7.500 4 6 4 4.200a3 3 0 0 1 6 0C10 6 9 7.500 7 10.500z" fill="#e3b52a" /><circle cx="7" cy="4" r="1.100" fill="#fff" /><path d="M1 12.500h12M2 10.500h3M9 10.500h3" stroke="#77777a" strokeWidth="1.200" /></Glyph>
      Select By<Caret />
    </Tool>
    <Tool $w={58}>
      <Glyph><path d="M5 3.500L9 2l4 1.500v6L9.500 12 5 10z" fill="#25d62c" stroke="#2f6e33" /><path d="M0 6.500h4" stroke="#4b4b4d" strokeWidth="1.500" /></Glyph>
      Convert
    </Tool>
  </Toolbar>
);

const SILHOUETTE =
  'M438 362L452 244Q453 232 457 226Q463 215 476 210Q485 207 495 209L638 243Q654 246 667 253Q688 265 706 286Q738 314 773 337Q800 354 832 367Q870 381 910 392Q970 407 1030 414Q1080 418 1158 413Q1170 412 1176 421Q1184 434 1178 446Q1174 454 1163 456Q1140 458 1117 458H1057Q1000 453 947 443Q890 430 827 406L783 390L717 360Q690 346 672 343Q655 341 638 345Q618 351 606 362Q592 376 583 394L575 393Z';
const FACE_TOP =
  'M446 361L457 248Q460 236 470 233Q478 231 487 233L629 267Q648 272 667 285L693 306Q720 332 750 353Q785 376 823 390Q860 404 890 413Q950 430 1013 438Q1085 443 1153 438';
const LOWER_EDGE = 'M672 342Q690 345 717 358L783 388L827 404Q890 427 947 440Q1000 450 1057 455H1117L1163 455';
const HOLE = 'M497 305Q504 293 518 292Q533 292 546 302Q556 313 557 327Q545 330 533 330Q517 329 507 319Q499 312 497 305Z';

const ModelView = () => (
  <Viewport>
    <svg viewBox="313 170 967 345" preserveAspectRatio="xMidYMid slice" fill="none" role="img" aria-label="Lever model">
      <defs>
        <linearGradient id="sky" gradientUnits="userSpaceOnUse" x1="0" y1="170" x2="0" y2="515">
          <stop offset="0" stopColor="#6e89d8" /><stop offset=".5" stopColor="#b4c3ec" /><stop offset=".85" stopColor="#e5ecf9" /><stop offset="1" stopColor="#fbfdff" />
        </linearGradient>
        <linearGradient id="bore" gradientUnits="userSpaceOnUse" x1="496" y1="292" x2="540" y2="354">
          <stop offset="0" stopColor="#4c4c4c" /><stop offset=".4" stopColor="#7c7c7c" /><stop offset=".68" stopColor="#cfcfcf" /><stop offset=".85" stopColor="#7c7c7c" /><stop offset="1" stopColor="#4c4c4c" />
        </linearGradient>
        <radialGradient id="tip" gradientUnits="userSpaceOnUse" cx="1166" cy="429" r="26">
          <stop offset="0" stopColor="#e6e6e6" /><stop offset=".3" stopColor="#b0b0b0" /><stop offset="1" stopColor="#6f6f6f" />
        </radialGradient>
        <linearGradient id="corner" gradientUnits="userSpaceOnUse" x1="452" y1="240" x2="492" y2="212">
          <stop offset="0" stopColor="#3f3f3f" /><stop offset=".5" stopColor="#6b6b6b" /><stop offset="1" stopColor="#a9a8a6" />
        </linearGradient>
        <clipPath id="body"><path d={SILHOUETTE} /></clipPath>
        <filter id="soft" x="-5%" y="-5%" width="110%" height="110%"><feGaussianBlur stdDeviation="2" /></filter>
      </defs>
      <rect x="313" y="170" width="967" height="345" fill="url(#sky)" />

      <g clipPath="url(#body)">
        <path d={SILHOUETTE} fill="#a9a8a5" />
        <path d="M487 233L629 267Q648 272 667 285L693 306Q720 332 750 353Q785 376 823 390Q860 404 890 413Q950 430 1013 438Q1085 443 1153 438" stroke="#656565" strokeWidth="14" filter="url(#soft)" />
        <path d="M633 258Q652 263 672 276L700 298Q727 324 756 345Q790 367 828 382" stroke="#d8d8d8" strokeWidth="5" filter="url(#soft)" />
        <path d="M828 381Q880 402 950 417Q1015 429 1076 432Q1120 432 1156 429" stroke="#8d8d8d" strokeWidth="9" filter="url(#soft)" />
        <path d="M438 362L452 244Q453 218 476 209L495 209L487 233L457 250L446 361Z" fill="url(#corner)" />
        <path d={`${FACE_TOP}L1163 456L1117 470L900 450L717 375L640 350L606 362L580 400Z`} fill="#434343" />
        <path d="M438 362L446 361L575 391L583 394V400H438Z" fill="#3b3b3b" />
        <path d="M575 391Q584 372 601 360Q618 347 640 343L638 346Q618 351 606 362Q592 376 583 394Z" fill="#6a6a6a" />
      </g>

      <g stroke="#c2c2c0" strokeWidth="1.200" strokeLinejoin="round">
        <path d={FACE_TOP} />
        <path d="M438 361.500L446 361L575 391L583 394" />
        <path d="M452 245L457 248M487 233L495 209M455 237Q460 221 476 220Q482 220 489 221L632 253M629 267L638 243M693 306L706 287M823 390L828 378" />
        <path d="M575 391Q584 372 601 360Q618 347 640 343Q656 341 672 342" />
        <path d={LOWER_EDGE} stroke="#a9aaab" />
        <path d="M457 226Q463 215 476 210Q485 207 495 209L638 243" stroke="#b8b8b6" strokeWidth="1" />
      </g>
      <path d="M717 360L783 390L827 406Q890 430 947 443Q1000 453 1057 458" stroke="#353a45" strokeWidth="1.300" />

      <ellipse cx="523" cy="321.700" rx="41" ry="32.500" transform="rotate(24 523 321.700)" fill="url(#bore)" stroke="#c9c9c7" strokeWidth="1.200" />
      <path d="M497 308Q503 334 525 340Q545 342 556 328Q545 330 533 330Q517 329 507 319Z" fill="#b0b0b0" fillOpacity=".8" />
      <path d="M495 311Q496 324 508 334Q520 343 536 341Q550 339 557 328" stroke="#d8d8d6" strokeWidth="1" />
      <path d={HOLE} fill="url(#sky)" />
      <path d="M483 313L494 311M556 327L562 331" stroke="#d8d8d6" />

      <path d="M1158 413Q1170 411 1177 421Q1184 434 1178 446Q1173 454 1163 456Q1153 445 1153 430Q1154 418 1158 413Z" fill="url(#tip)" />
      <path d="M1153 428Q1152 438 1162 455M1153 438Q1168 438 1178 433" stroke="#e2e2e2" strokeWidth="1.200" />

      <path d="M832 367Q870 381 910 392Q970 407 1030 414Q1080 419 1158 413L1155 425Q1110 428 1077 428Q1040 427 1000 422Q945 413 900 402Q862 391 827 378Z" fill="#08e208" stroke="#1a4a8a" strokeWidth="1.200" strokeDasharray="1.500 1.500" />

      <path d="M836 381v13l3-2.500 2.500 5 2-1-2.500-4.500h4z" fill="#fff" stroke="#222" strokeWidth=".9" />
      <path d="M846 393l2-2h8v8l-2 2h-8z" fill="#111" />
      <path d="M847 394h7v7h-7z" fill="#fff" stroke="#222" strokeWidth=".8" />

      <g fill="#eae8ea">
        <path d="M328 479l23 11v23l-23-12z" fill="#dcdcde" stroke="#44464a" strokeWidth="1.300" />
        <path d="M317 479l23 11v23l-23-11z" stroke="#d83a68" strokeWidth="1.300" />
      </g>

      <g>
        <path d="M731.500 482.500h180v5h-180z" fill="#fff" stroke="#222" />
        <path d="M731 482h46v6h-46zM821 482h47v6h-47z" fill="#000" />
        <g fill="#222" fontFamily="Open Sans, sans-serif" fontSize="10" textAnchor="middle">
          <text x="731" y="479">0.00</text>
          <text x="820" y="479">50.00</text>
          <text x="926" y="479">100.00 (mm)</text>
          <text x="775" y="498">25.00</text>
          <text x="867" y="498">75.00</text>
        </g>
      </g>

      <g>
        <path d="M1257 450L1260 415" stroke="#0d7d1c" strokeWidth="3" />
        <path d="M1261 408l5 12h-11z" fill="#0d8a1c" />
        <path d="M1257 450L1280 456" stroke="#c01818" strokeWidth="3" />
        <circle cx="1276" cy="450" r="5" fill="#35cdbd" />
        <path d="M1257 449L1246 473" stroke="#1a1ac0" strokeWidth="3" />
        <path d="M1243 482L1241 471l5-3 6 5z" fill="#1212b0" />
        <g fontFamily="Open Sans, sans-serif" fontSize="10">
          <text x="1261" y="402" fill="#35b34a">Y</text>
          <text x="1241" y="487" fill="#2a2ac0">Z</text>
        </g>
      </g>

      <g fill="#fff" fontFamily="Open Sans, sans-serif" fontWeight="700">
        <path d="M1225 214.500L1236 190.500h7.500L1232 214.500z" />
        <path d="M1240 195l4-4.500L1254 214.500h-7.500z" />
        <text x="1253" y="214" fontSize="26">ns</text>
        <text x="1263" y="235" fontSize="14">20</text>
      </g>
    </svg>
  </Viewport>
);

const GraphPanel = () => (
  <Panel $grow="507 1 0">
    <PanelHead>Graph<HatchGrip /><HeadButtons /></PanelHead>
    <GraphCanvas>
      <svg viewBox="313 537 507 135" fill="none" role="img" aria-label="Force over time">
        <path d="M359 559.500h440M359 615.500h440M359 595.500h6" stroke="#cbcbce" />
        <path d="M365.500 559v57M799 616v5" stroke="#e4e4e6" />
        <path d="M370 587h428" stroke="#c03038" strokeWidth="1.300" strokeDasharray="3 2" />
        <path d="M363.500 585.500h3v3h-3z" fill="#fff" stroke="#b52838" />
        <path d="M799 555v60" stroke="#000" strokeWidth="2.600" strokeLinecap="round" />
        <path d="M365 649h434v13H365z" fill="#0d7ed3" />
        <g fill="#3b3b3d" fontFamily="Open Sans, sans-serif" fontSize="10" textAnchor="end">
          <text x="355" y="564">0.5</text>
          <text x="355" y="599">-0.125</text>
          <text x="355" y="620">-0.5</text>
          <text x="798" y="550" fontWeight="700">1.</text>
          <text x="798" y="634">1.</text>
          <text x="582" y="659" fill="#d8ebfa" textAnchor="middle">1</text>
        </g>
      </svg>
    </GraphCanvas>
    <GraphTabs><GraphTab>Graphics Annotations</GraphTab><GraphTab $active>Graph</GraphTab></GraphTabs>
  </Panel>
);

const TabularPanel = () => (
  <Panel $grow="456 1 0">
    <PanelHead>
      Tabular Data<HatchGrip />
      <Glyph w={7} h={5}><path d="M0 .5h7L3.500 4.500z" fill="#222" /></Glyph>
    </PanelHead>
    <TabularArea>
      <DataTable>
        <colgroup><Col $w={13} /><Col $w={33} /><Col $w={41} /><Col $w={66} /></colgroup>
        <thead>
          <tr>
            <th /><th scope="col">Steps</th><th scope="col">Time [s]</th>
            <th scope="col"><ForceHead><Tick type="checkbox" defaultChecked />Force [N]</ForceHead></th>
          </tr>
        </thead>
        <tbody>
          <tr><th scope="row">1</th><td>1</td><td>0.</td><td>= 0.</td></tr>
          <tr><th scope="row">2</th><td>1</td><td>1.</td><td>0.</td></tr>
          <tr><th scope="row">*</th><td /><td /><td /></tr>
        </tbody>
      </DataTable>
    </TabularArea>
  </Panel>
);

export default function App() {
  return (
    <Shell>
      <GlobalStyle />
      <TitleBar>
        <ContextTab>Context</ContextTab>
        <Title>A : Static Structural - Mechanical [Ansys Mechanical Enterprise]</Title>
        <WindowButtons>
          <button aria-label="Minimize"><Glyph w={9} h={3}><path d="M0 1.500h9" stroke="#222" strokeWidth="2" /></Glyph></button>
        </WindowButtons>
      </TitleBar>
      <TabRow>
        <FileEdge />
        <Tabs>
          <Tab>Home</Tab><Tab>Environment</Tab><Tab $active>Display</Tab>
          <Tab>Selection</Tab><Tab>Automation</Tab><Tab>Add-ons</Tab>
        </Tabs>
        <QuickLaunch placeholder="Quick Launch" aria-label="Quick Launch" />
        <Collapse aria-label="Collapse ribbon"><Chevron up /></Collapse>
      </TabRow>
      <RibbonBar />
      <RibbonTail />
      <Workspace>
        <SideColumn><Outline /><Details /></SideColumn>
        <MainColumn>
          <ViewToolbar />
          <ModelView />
          <BottomRow><GraphPanel /><TabularPanel /></BottomRow>
        </MainColumn>
      </Workspace>
      <StatusBar>s</StatusBar>
    </Shell>
  );
}
